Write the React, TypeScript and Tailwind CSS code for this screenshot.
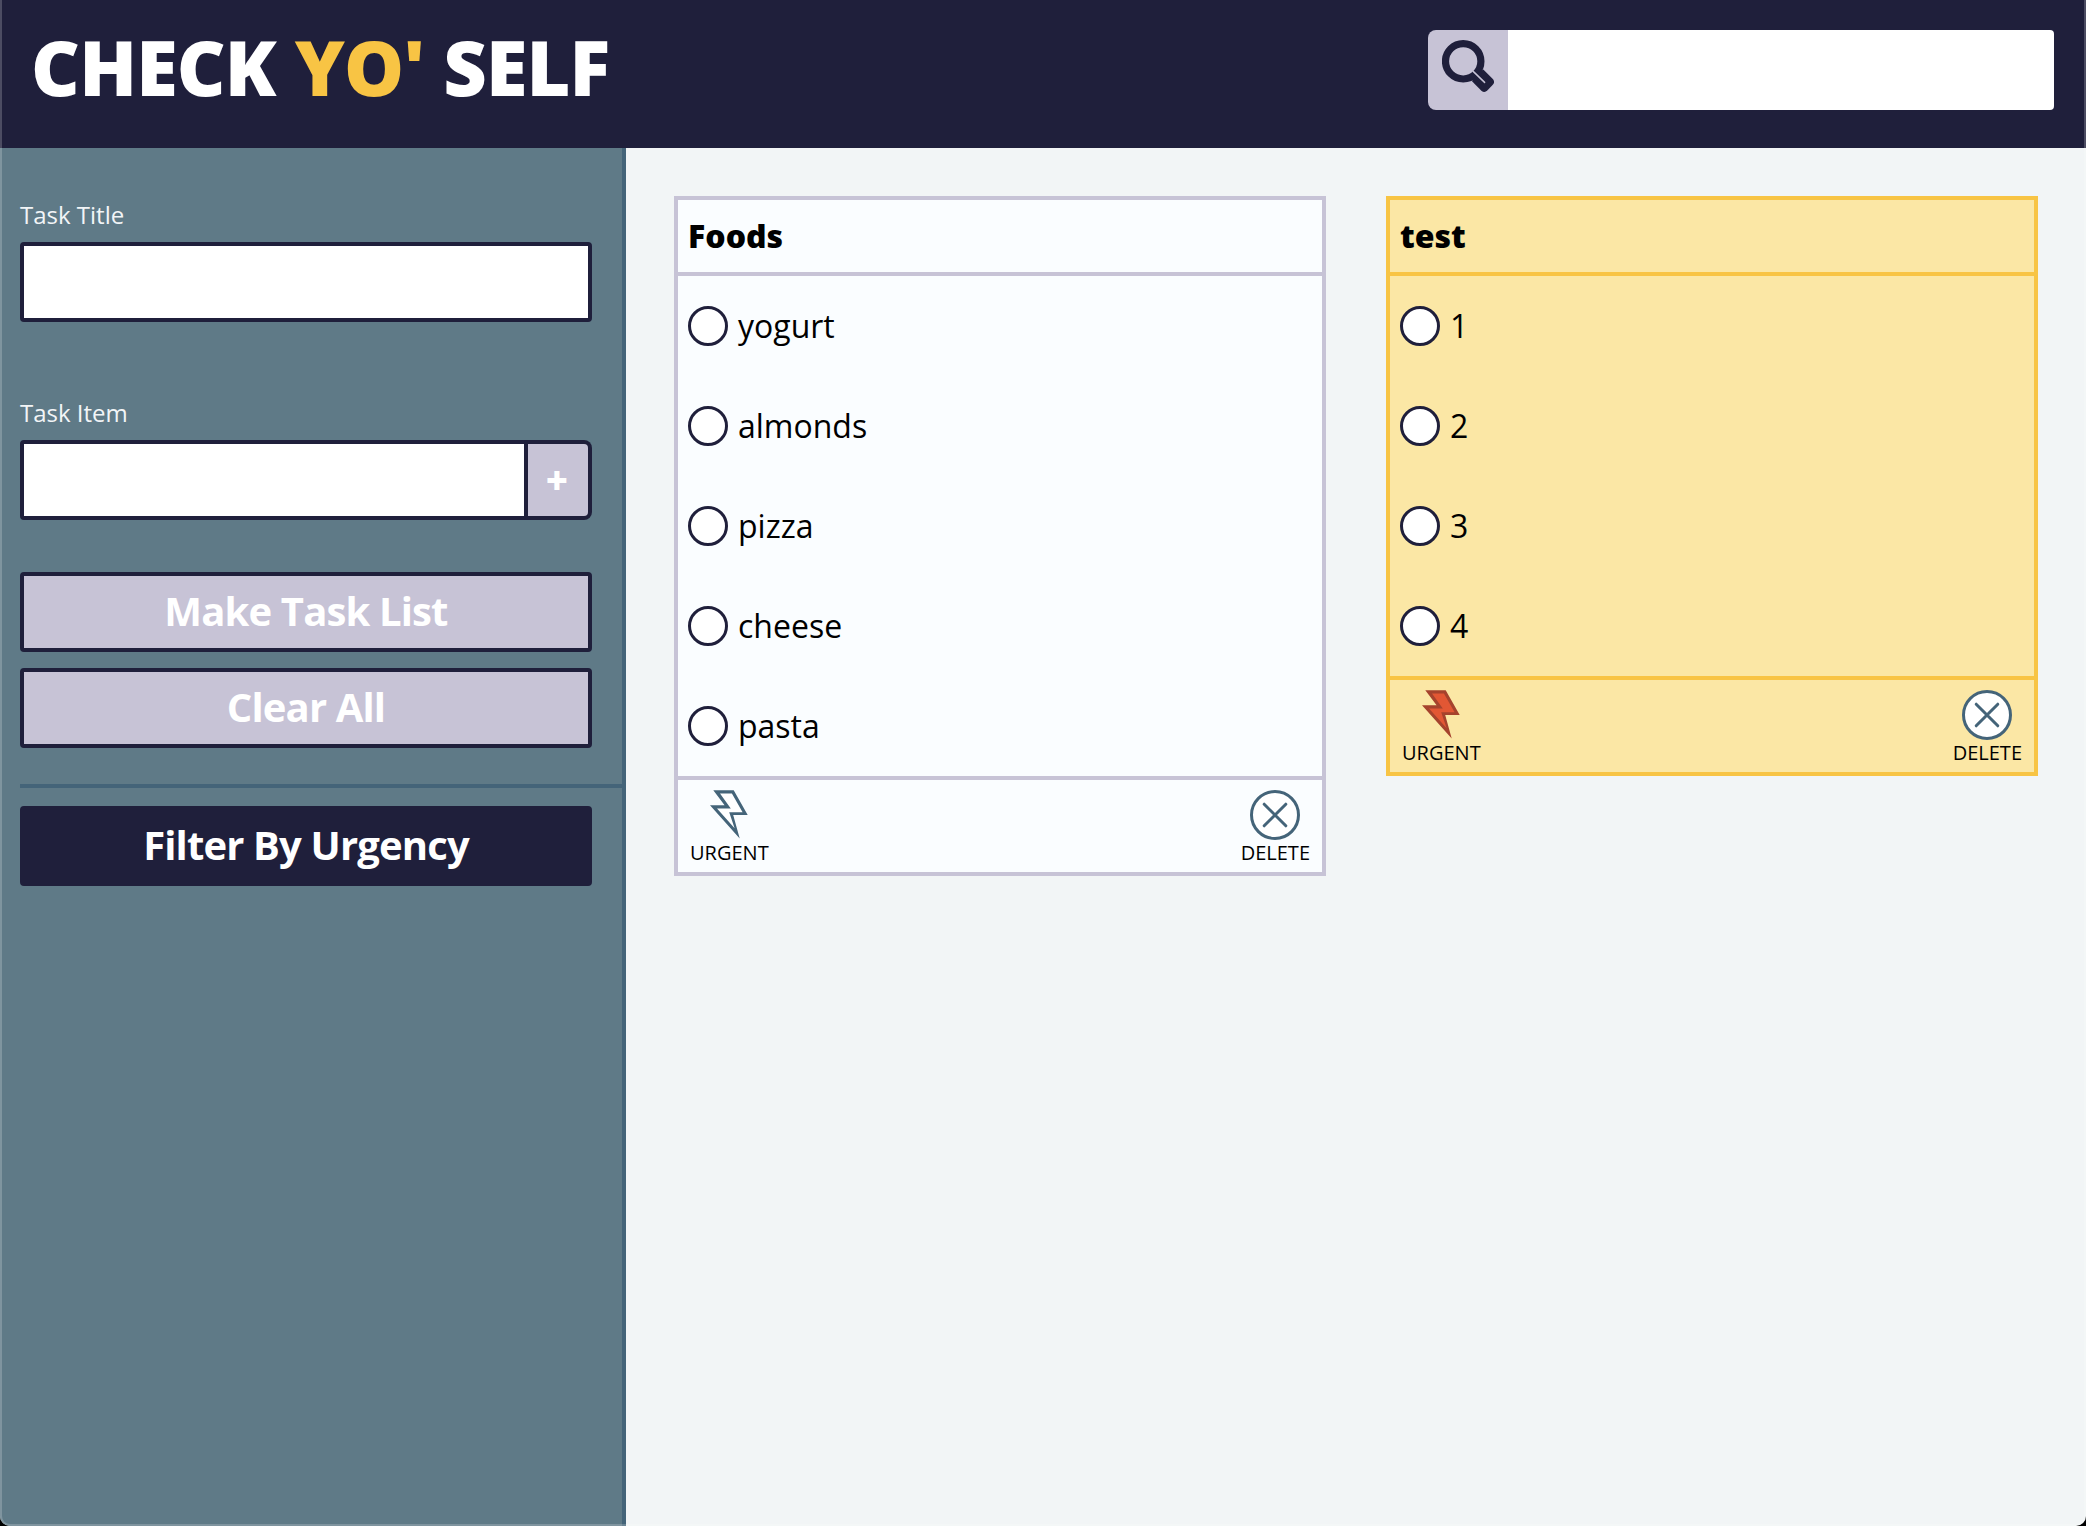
type Card = { title: string; items: string[]; urgent: boolean };

const cards: Card[] = [
  { title: "Foods", items: ["yogurt", "almonds", "pizza", "cheese", "pasta"], urgent: false },
  { title: "test", items: ["1", "2", "3", "4"], urgent: true },
];

function SearchIcon() {
  return (
    <svg width="52" height="52" viewBox="0 0 52 52">
      <circle cx="21.2" cy="21.3" r="17.7" fill="none" stroke="#1f1f3b" strokeWidth="7.2" />
      <path
        d="M41.3 29.6 L50.6 38.8 Q53.4 41.8 50.8 44.8 L45.3 50.6 Q42.4 53.2 39.4 50.7 L30 41.2 L34 34 Z"
        fill="#1f1f3b"
      />
      <path d="M31.2 31.4 L42.6 42.4" stroke="#c7c3d6" strokeWidth="1.5" strokeLinecap="round" />
    </svg>
  );
}

function Bolt({ urgent }: { urgent: boolean }) {
  return (
    <svg width="40" height="50" viewBox="0 0 40 50" className="ml-0.5 block">
      <path
        d="M3.3 .3 H23.7 L37.7 25 H23.2 L29.7 48.4 L0 15.3 H14.6 Z"
        fill={urgent ? "#a5432d" : "#446479"}
      />
      <path
        d="M10 3.6 H21.9 L32.6 22.2 H19.2 L24.6 38.2 L7 18.4 H20.8 Z"
        fill={urgent ? "#e25734" : "#fff"}
      />
    </svg>
  );
}

function DeleteIcon() {
  return (
    <svg width="50" height="50" viewBox="0 0 50 50" className="block">
      <circle cx="25" cy="25" r="23.5" fill="#fff" stroke="#446479" strokeWidth="3" />
      <path d="M14.2 14.2 L35.8 35.8 M35.8 14.2 L14.2 35.8" stroke="#446479" strokeWidth="3" strokeLinecap="round" />
    </svg>
  );
}

function TaskCard({ card }: { card: Card }) {
  const line = card.urgent ? "border-[#f8c444]" : "border-[#c7c3d6]";
  const fill = card.urgent ? "bg-[#fbe7a5]" : "bg-[#fafdff]";
  return (
    <article className={`w-[652px] border-4 ${line} ${fill}`}>
      <h2 className={`flex h-[76px] items-center border-b-4 px-2.5 text-[32px] font-extrabold ${line}`}>
        {card.title}
      </h2>
      <ul>
        {card.items.map((item) => (
          <li key={item} className="flex h-[100px] items-center gap-2.5 px-2.5 text-[32px]">
            <span className="size-10 rounded-full border-3 border-[#1f1f3b] bg-white" />
            {item}
          </li>
        ))}
      </ul>
      <footer className={`flex h-24 justify-between border-t-4 px-3 pt-2.5 text-xl leading-[25px] ${line}`}>
        <div className="flex flex-col items-center">
          <Bolt urgent={card.urgent} />
          URGENT
        </div>
        <div className="flex flex-col items-center">
          <DeleteIcon />
          DELETE
        </div>
      </footer>
    </article>
  );
}

export default function App() {
  const field = "block border-4 border-[#1f1f3b] bg-white outline-none";
  const button =
    "block h-20 w-[572px] rounded-[4px] border-4 border-[#1f1f3b] pb-[3px] text-[40px] leading-none font-bold tracking-[-0.85px] text-white";
  return (
    <div className="bg-black">
      <div className="relative flex h-[1526px] flex-col overflow-hidden rounded-b-[10px] bg-[#f2f5f6] font-['Open_Sans',sans-serif] text-black">
        <header className="flex h-[148px] shrink-0 justify-between bg-[#1f1f3b] pt-[30px] pr-8 pl-[31px]">
          <h1 className="text-[75.5px] leading-[73px] font-extrabold tracking-[-0.85px] text-white">
            CHECK <span className="text-[#f8c444]">YO'</span> SELF
          </h1>
          <div className="flex h-20">
            <button aria-label="Search" className="w-20 rounded-l-lg bg-[#c7c3d6] pt-2.5 pl-3.5">
              <span className="flex h-full items-start">
                <SearchIcon />
              </span>
            </button>
            <input aria-label="Search tasks" className="w-[546px] rounded-r-[4px] bg-white outline-none" />
          </div>
        </header>
        <div className="flex flex-1">
          <aside className="w-[626px] border-r-4 border-[#446479] bg-[#5f7a87] pt-[49px] pl-5">
            <label className="block text-2xl leading-9 text-[#f2f5f7]">Task Title</label>
            <input aria-label="Task Title" className={`${field} mt-[9px] h-20 w-[572px] rounded-[4px]`} />
            <label className="mt-[73px] block text-2xl leading-9 text-[#f2f5f7]">Task Item</label>
            <div className="mt-[9px] flex">
              <input aria-label="Task Item" className={`${field} h-20 w-[508px] rounded-l-[4px]`} />
              <button className="h-20 w-16 rounded-r-lg border-4 border-l-0 border-[#1f1f3b] bg-[#c7c3d6] pr-0.5 pb-[3px] text-[38px] leading-none font-extrabold text-white">
                +
              </button>
            </div>
            <button className={`${button} mt-[52px] bg-[#c7c3d6]`}>Make Task List</button>
            <button className={`${button} mt-4 bg-[#c7c3d6]`}>Clear All</button>
            <hr className="mt-9 mb-[18px] border-t-4 border-[#446479]" />
            <button className={`${button} bg-[#1f1f3b]`}>Filter By Urgency</button>
          </aside>
          <main className="flex flex-1 items-start gap-[60px] p-12">
            {cards.map((card) => (
              <TaskCard key={card.title} card={card} />
            ))}
          </main>
        </div>
        <div className="pointer-events-none absolute inset-0 rounded-b-[10px] border-2 border-t-0 border-white/20" />
      </div>
    </div>
  );
}
